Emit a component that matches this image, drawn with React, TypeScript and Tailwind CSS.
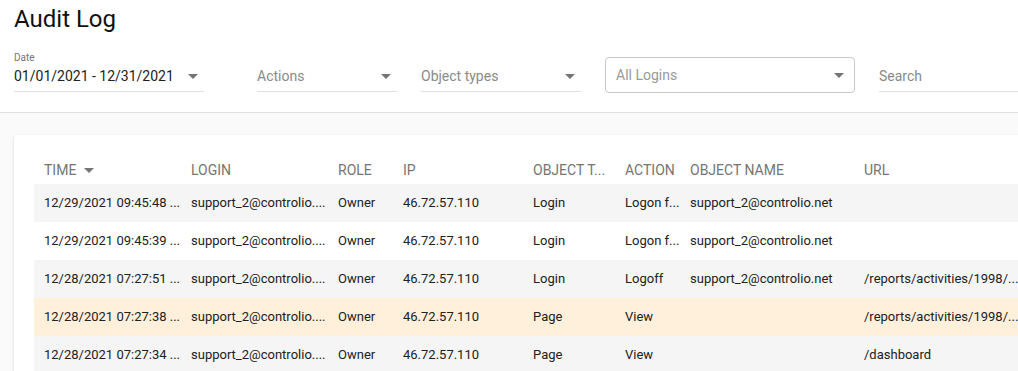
import React from "react";

type Row = {
  time: string;
  login: string;
  role: string;
  ip: string;
  objectType: string;
  action: string;
  objectName: string;
  url: string;
  bg: string;
};

const rows: Row[] = [
  {
    time: "12/29/2021 09:45:48 ...",
    login: "support_2@controlio....",
    role: "Owner",
    ip: "46.72.57.110",
    objectType: "Login",
    action: "Logon f...",
    objectName: "support_2@controlio.net",
    url: "",
    bg: "bg-[#f5f5f5]",
  },
  {
    time: "12/29/2021 09:45:39 ...",
    login: "support_2@controlio....",
    role: "Owner",
    ip: "46.72.57.110",
    objectType: "Login",
    action: "Logon f...",
    objectName: "support_2@controlio.net",
    url: "",
    bg: "bg-white",
  },
  {
    time: "12/28/2021 07:27:51 ...",
    login: "support_2@controlio....",
    role: "Owner",
    ip: "46.72.57.110",
    objectType: "Login",
    action: "Logoff",
    objectName: "support_2@controlio.net",
    url: "/reports/activities/1998/...",
    bg: "bg-[#f5f5f5]",
  },
  {
    time: "12/28/2021 07:27:38 ...",
    login: "support_2@controlio....",
    role: "Owner",
    ip: "46.72.57.110",
    objectType: "Page",
    action: "View",
    objectName: "",
    url: "/reports/activities/1998/...",
    bg: "bg-[#fff0db]",
  },
  {
    time: "12/28/2021 07:27:34 ...",
    login: "support_2@controlio....",
    role: "Owner",
    ip: "46.72.57.110",
    objectType: "Page",
    action: "View",
    objectName: "",
    url: "/dashboard",
    bg: "bg-[#f5f5f5]",
  },
];

const Caret = () => (
  <svg width="10" height="5" viewBox="0 0 10 5" className="shrink-0">
    <path d="M0 0 L10 0 L5 5 Z" fill="#757575" />
  </svg>
);

function Select({
  value,
  placeholder,
  className,
}: {
  value?: string;
  placeholder?: string;
  className: string;
}) {
  return (
    <div
      className={`flex h-[26px] items-center justify-between border-b border-[#e0e0e0] pr-[6px] ${className}`}
    >
      <span
        className={`text-[14px] ${value ? "text-[#212121]" : "text-[#8a8a8a]"}`}
      >
        {value ?? placeholder}
      </span>
      <Caret />
    </div>
  );
}

const th = "overflow-hidden whitespace-nowrap px-[10px] font-normal";
const td = "overflow-hidden whitespace-nowrap px-[10px]";

export default function App() {
  return (
    <div className="h-[371px] w-[1018px] overflow-hidden bg-white font-['Roboto',sans-serif]">
      {/* title + filters */}
      <div className="pl-[14px] pt-[2px]">
        <h1 className="text-[24px] leading-[34px] text-[#111]">Audit Log</h1>
        <div className="mt-[16px] flex items-end">
          <div className="flex w-[190px] flex-col">
            <span className="mb-[2px] text-[10px] leading-[12px] text-[#757575]">
              Date
            </span>
            <Select value="01/01/2021 - 12/31/2021" className="w-[190px] pb-[4px]" />
          </div>
          <Select placeholder="Actions" className="ml-[53px] w-[140px] pb-[4px]" />
          <Select placeholder="Object types" className="ml-[24px] w-[160px] pb-[4px]" />
          <div className="ml-[24px] mb-[-1px] flex h-[36px] w-[250px] items-center justify-between rounded-[4px] border border-[#c8c8c8] px-[10px]">
            <span className="text-[14px] text-[#9a9a9a]">All Logins</span>
            <Caret />
          </div>
          <div className="ml-[24px] flex h-[26px] flex-1 items-center border-b border-[#e0e0e0] pb-[4px]">
            <span className="text-[14px] text-[#8a8a8a]">Search</span>
          </div>
        </div>
      </div>

      {/* content */}
      <div className="mt-[20px] h-[300px] border-t border-[#e0e0e0] bg-[#fafafa] pl-[14px] pt-[22px]">
        <div className="h-[300px] rounded-tl-[4px] bg-white pl-[20px] pt-[21px] shadow-[0_1px_3px_rgba(0,0,0,0.15)]">
          <table className="w-full table-fixed border-collapse text-left text-[13px]">
            <colgroup>
              <col className="w-[147px]" />
              <col className="w-[147px]" />
              <col className="w-[65px]" />
              <col className="w-[130px]" />
              <col className="w-[92px]" />
              <col className="w-[65px]" />
              <col className="w-[174px]" />
              <col />
            </colgroup>
            <thead>
              <tr className="h-[28px] text-[14px] text-[#757575]">
                <th className={th}>
                  <span className="flex items-center gap-[8px]">
                    TIME
                    <Caret />
                  </span>
                </th>
                <th className={th}>LOGIN</th>
                <th className={th}>ROLE</th>
                <th className={th}>IP</th>
                <th className={th}>OBJECT T...</th>
                <th className={th}>ACTION</th>
                <th className={th}>OBJECT NAME</th>
                <th className={th}>URL</th>
              </tr>
            </thead>
            <tbody className="text-[#212121]">
              {rows.map((r, i) => (
                <tr key={i} className={`h-[38px] ${r.bg}`}>
                  <td className={td}>{r.time}</td>
                  <td className={td}>{r.login}</td>
                  <td className={td}>{r.role}</td>
                  <td className={td}>{r.ip}</td>
                  <td className={td}>{r.objectType}</td>
                  <td className={td}>{r.action}</td>
                  <td className={td}>{r.objectName}</td>
                  <td className={td}>{r.url}</td>
                </tr>
              ))}
            </tbody>
          </table>
        </div>
      </div>
    </div>
  );
}
